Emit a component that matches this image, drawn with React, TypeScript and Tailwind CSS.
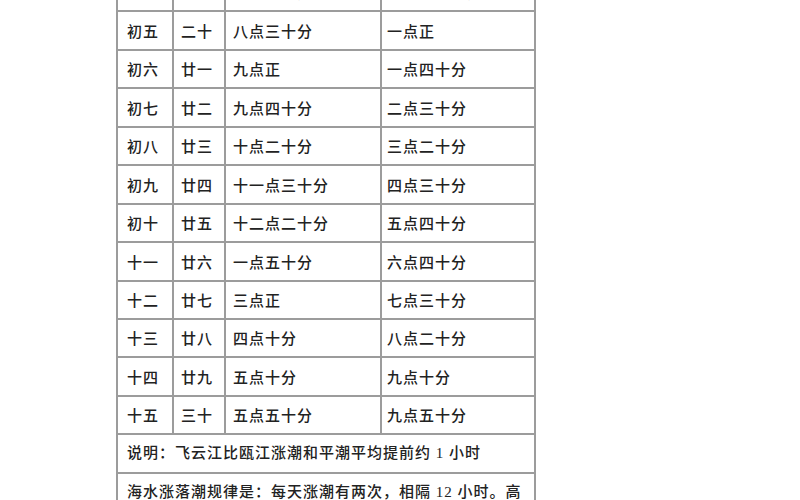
const rows: [string, string, string, string][] = [
  ["初四", "十九", "七点五十分", "十二点二十分"],
  ["初五", "二十", "八点三十分", "一点正"],
  ["初六", "廿一", "九点正", "一点四十分"],
  ["初七", "廿二", "九点四十分", "二点三十分"],
  ["初八", "廿三", "十点二十分", "三点二十分"],
  ["初九", "廿四", "十一点三十分", "四点三十分"],
  ["初十", "廿五", "十二点二十分", "五点四十分"],
  ["十一", "廿六", "一点五十分", "六点四十分"],
  ["十二", "廿七", "三点正", "七点三十分"],
  ["十三", "廿八", "四点十分", "八点二十分"],
  ["十四", "廿九", "五点十分", "九点十分"],
  ["十五", "三十", "五点五十分", "九点五十分"],
]

export default function App() {
  return (
    <div
      className="h-[500px] w-[800px] overflow-hidden bg-white text-[15px] font-medium tracking-[1px] text-[#222]"
      style={{ fontFamily: '"Liberation Serif", "Noto Sans CJK SC", serif' }}
    >
      <div className="ml-[116px] mt-[-28px] grid w-[420px] grid-cols-[54px_50px_154px_152px] auto-rows-[36.45px] gap-[2px] bg-[#9c9c9c] p-[2px]">
        {rows.map((r, i) => (
          <div key={i} className="contents">
            <div className="flex items-center bg-white pl-[9px] pt-[3px]">{r[0]}</div>
            <div className="flex items-center bg-white pl-[7px] pt-[3px]">{r[1]}</div>
            <div className="flex items-center bg-white pl-[7px] pt-[3px]">{r[2]}</div>
            <div className="flex items-center bg-white pl-[5px] pt-[3px]">{r[3]}</div>
          </div>
        ))}
        <div className="col-span-4 flex items-center bg-white pl-[9px]">
          说明：飞云江比瓯江涨潮和平潮平均提前约 1 小时
        </div>
        <div className="col-span-4 row-span-2 bg-white pl-[9px] pr-[6px] pt-[6px] leading-[24px]">
          海水涨落潮规律是：每天涨潮有两次，相隔 12 小时。高潮和低潮之间相隔约 6 小时。
        </div>
      </div>
    </div>
  )
}
